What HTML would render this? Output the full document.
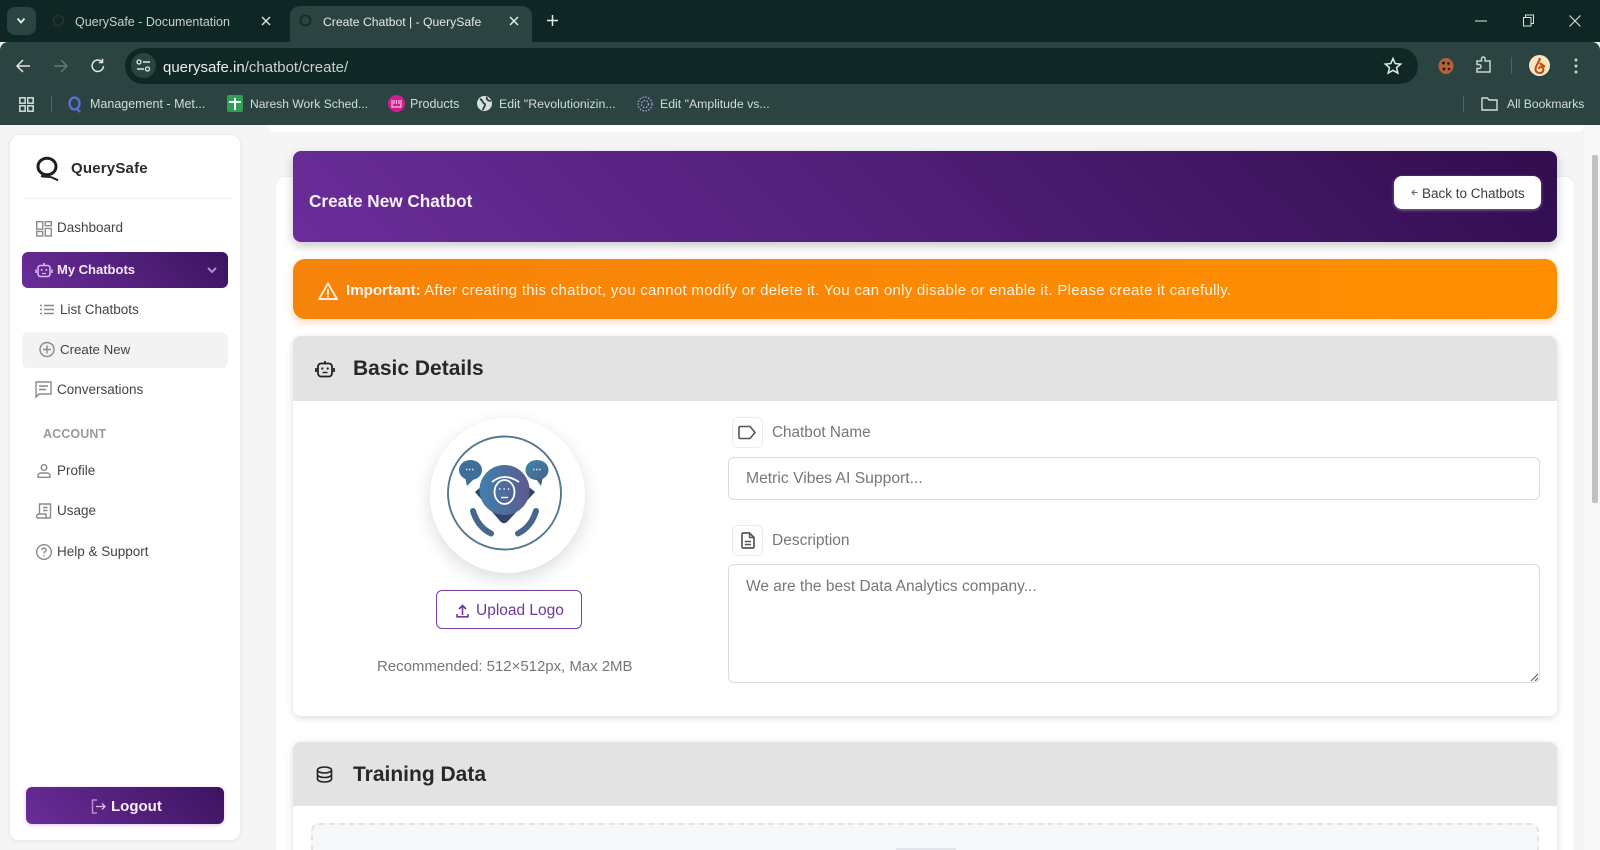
<!DOCTYPE html>
<html lang="en"><head><meta charset="utf-8"><title>Create Chatbot | - QuerySafe</title>
<style>
*{box-sizing:border-box}
html{margin:0;padding:0;width:1600px;height:850px;overflow:hidden}
body{margin:0;padding:0;width:1600px;height:850px;overflow:hidden;position:relative;background:#f5f5f5;font-family:"Liberation Sans",sans-serif}
.a{position:absolute;white-space:nowrap}
.t{position:absolute;white-space:nowrap;line-height:20px;transform:translateY(-9px)}
svg{position:absolute;overflow:visible}
.tb{color:#d3dcd9;font-size:12.2px}
.nav{color:#444;font-size:13.5px}
.ic{fill:none;stroke:#8a8a8a;stroke-width:1.4}
.grad{background:linear-gradient(45deg,#6a2d9a 0%,#4f1e76 60%,#3d1360 100%)}
#clip{position:absolute;left:0;top:0;width:1600px;height:850px;overflow:hidden}
</style></head><body><div id="clip">

<!-- Browser chrome -->
<div class="a" style="left:0;top:0;width:1600px;height:42px;background:#0e2624"></div>
<div class="a" style="left:0;top:42px;width:1600px;height:83px;background:#2c4441;border-radius:8px 8px 0 0"></div>
<div class="a" style="left:7px;top:7px;width:29px;height:28px;background:#2c4441;border-radius:8px"></div>
<svg style="left:16px;top:17px" width="10" height="8"><path d="M1.5 1.5L5 5.5L8.5 1.5" fill="none" stroke="#e6ecea" stroke-width="1.8"/></svg>
<div class="a" style="left:290px;top:6px;width:242px;height:38px;background:#2c4441;border-radius:10px 10px 0 0"></div>
<svg style="left:52px;top:14px" width="14" height="14"><circle cx="6.5" cy="6.5" r="5" fill="none" stroke="#27302e" stroke-width="2"/></svg>
<div class="t tb" style="left:75px;top:20.5px;font-size:12.5px;color:#c7d0ce">QuerySafe - Documentation</div>
<svg style="left:261px;top:16px" width="10" height="10"><path d="M1 1L9 9M9 1L1 9" stroke="#d6dedc" stroke-width="1.5"/></svg>
<svg style="left:299px;top:14px" width="14" height="14"><circle cx="6.5" cy="6.5" r="5" fill="none" stroke="#1a2a28" stroke-width="2"/></svg>
<div class="t tb" style="left:323px;top:20.5px;font-size:12.2px;color:#e4eae8">Create Chatbot | - QuerySafe</div>
<svg style="left:509px;top:16px" width="10" height="10"><path d="M1 1L9 9M9 1L1 9" stroke="#e4eae8" stroke-width="1.5"/></svg>
<svg style="left:547px;top:15px" width="11" height="11"><path d="M5.500 0V11M0 5.500H11" stroke="#e4eae8" stroke-width="1.500"/></svg>
<svg style="left:1475px;top:20px" width="12" height="2"><path d="M0 1H12" stroke="#e4eae8" stroke-width="1"/></svg>
<svg style="left:1522px;top:14px" width="13" height="13"><path d="M1.5 3.5H9V12H1.5ZM3.5 3.5V1H11.5V9.5H9" fill="none" stroke="#dce3e1" stroke-width="1"/></svg>
<svg style="left:1569px;top:15px" width="12" height="12"><path d="M.5 .5L11.5 11.5M11.5 .5L.5 11.5" stroke="#e4eae8" stroke-width="1"/></svg>

<svg style="left:15px;top:58px" width="16" height="16"><path d="M15 8H2M8 2L2 8L8 14" fill="none" stroke="#dfe6e4" stroke-width="1.5"/></svg>
<svg style="left:53px;top:58px" width="16" height="16"><path d="M1 8H14M8 2L14 8L8 14" fill="none" stroke="#667a75" stroke-width="1.4"/></svg>
<svg style="left:90px;top:58px" width="16" height="16"><path d="M13.5 8A5.7 5.7 0 1 1 11.7 3.6M12.5 .8V4.5H8.8" fill="none" stroke="#dfe6e4" stroke-width="1.5"/></svg>
<div class="a" style="left:125px;top:48px;width:1293px;height:36px;border-radius:18px;background:#0f2725"></div>
<div class="a" style="left:131px;top:53px;width:25px;height:25px;border-radius:50%;background:#2c4441"></div>
<svg style="left:136px;top:59px" width="15" height="14"><circle cx="3" cy="3" r="2" fill="none" stroke="#e0e7e5" stroke-width="1.3"/><path d="M7 3H14M1 10H8" stroke="#e0e7e5" stroke-width="1.4"/><circle cx="11.5" cy="10" r="2" fill="none" stroke="#e0e7e5" stroke-width="1.3"/></svg>
<div class="t" style="left:163px;top:67px;font-size:15px;color:#e9eeec">querysafe.in<span style="color:#c8d1cf">/chatbot/create/</span></div>
<svg style="left:1384px;top:57px" width="18" height="18"><path d="M9 1.5L11.2 6.6L16.7 7.1L12.5 10.7L13.8 16.1L9 13.3L4.2 16.1L5.5 10.7L1.3 7.1L6.8 6.6Z" fill="none" stroke="#e4eae8" stroke-width="1.5"/></svg>
<svg style="left:1438px;top:57px" width="16" height="18"><ellipse cx="8" cy="9" rx="7.500" ry="8" fill="#b5623a"/><circle cx="5.500" cy="6" r="1.500" fill="#2b1a10"/><circle cx="10.500" cy="6.500" r="1.400" fill="#2b1a10"/><circle cx="6" cy="12" r="1.500" fill="#2b1a10"/><circle cx="11" cy="12" r="1.300" fill="#2b1a10"/></svg>
<svg style="left:1475px;top:56px" width="18" height="18"><path d="M2 5H6.5V2.8A1.8 1.8 0 0 1 10.100 2.800V5H15V16H2V12.500H4A2 2 0 0 0 4 8.500H2Z" fill="none" stroke="#c9d3d0" stroke-width="1.500"/></svg>
<div class="a" style="left:1511px;top:57px;width:1px;height:17px;background:#4d6461"></div>
<div class="a" style="left:1529px;top:55px;width:21px;height:21px;border-radius:50%;background:#f7e6c4"></div>
<svg style="left:1529px;top:55px" width="21" height="21"><path d="M11 3C10 8 7 10 6.500 14C6.500 17 9 18 11 18C14 18 15 15 14 13C13 11 10.500 11 10 14M11 8C12.500 10 14.500 10 16 12" fill="none" stroke="#c04a12" stroke-width="2"/></svg>
<svg style="left:1574px;top:57px" width="4" height="18"><circle cx="2" cy="3" r="1.500" fill="#c9d3d0"/><circle cx="2" cy="9" r="1.500" fill="#c9d3d0"/><circle cx="2" cy="15" r="1.500" fill="#c9d3d0"/></svg>

<svg style="left:19px;top:97px" width="15" height="15"><g fill="none" stroke="#d6dedc" stroke-width="1.500"><rect x=".8" y=".8" width="5.400" height="5.400"/><rect x="8.800" y=".8" width="5.400" height="5.400"/><rect x=".8" y="8.800" width="5.400" height="5.400"/><rect x="8.800" y="8.800" width="5.400" height="5.400"/></g></svg>
<div class="a" style="left:51px;top:96px;width:1px;height:16px;background:#4d6461"></div>
<svg style="left:67px;top:96px" width="15" height="17"><ellipse cx="7.500" cy="7.500" rx="5" ry="6" fill="none" stroke="#5a6fe0" stroke-width="2.200"/><path d="M9 12L13 16" stroke="#5a6fe0" stroke-width="2.200"/></svg>
<div class="t tb" style="left:90px;top:102.500px;font-size:12.500px">Management - Met...</div>
<div class="a" style="left:227px;top:95px;width:16px;height:17px;background:#2f9e56;border-radius:2px"></div>
<svg style="left:227px;top:95px" width="16" height="17"><path d="M2 7H14M8 3V15" stroke="#fff" stroke-width="2"/></svg>
<div class="t tb" style="left:250px;top:102.500px;font-size:12.100px">Naresh Work Sched...</div>
<div class="a" style="left:388px;top:95px;width:17px;height:17px;background:#d01d8f;border-radius:50%"></div>
<svg style="left:391px;top:98px" width="11" height="11"><path d="M1 2V9H10V2M3 2V6M5.500 2V6M8 2V6" fill="none" stroke="#f7bde3" stroke-width="1.200"/></svg>
<div class="t tb" style="left:410px;top:102.500px;font-size:12.500px">Products</div>
<div class="a" style="left:477px;top:96px;width:15px;height:15px;background:#d8dfdd;border-radius:50%"></div>
<svg style="left:477px;top:96px" width="15" height="15"><path d="M3 3C6 4 5 7 8 8C9 10 6 11 6 14M10 1C9 3 11 5 14 5" fill="none" stroke="#2c4441" stroke-width="1.800"/></svg>
<div class="t tb" style="left:499px;top:102.500px;font-size:12.400px">Edit "Revolutionizin...</div>
<svg style="left:637px;top:96px" width="16" height="16"><circle cx="8" cy="8" r="7" fill="none" stroke="#a8a4e0" stroke-width="1.300" stroke-dasharray="1.500 1.500"/><circle cx="8" cy="8" r="3.500" fill="none" stroke="#a8a4e0" stroke-width="1.300" stroke-dasharray="1.500 1.500"/></svg>
<div class="t tb" style="left:660px;top:102.500px;font-size:12.300px">Edit "Amplitude vs...</div>
<div class="a" style="left:1463px;top:96px;width:1px;height:16px;background:#4d6461"></div>
<svg style="left:1481px;top:97px" width="17" height="14"><path d="M1 1H6.500L8 3H16V13H1Z" fill="none" stroke="#d6dedc" stroke-width="1.400"/></svg>
<div class="t tb" style="left:1507px;top:102.500px;font-size:12.100px">All Bookmarks</div>

<!-- Top card remnant -->
<div class="a" style="left:268px;top:125px;width:1316px;height:7px;background:#fff;border-radius:0 0 12px 12px"></div>

<!-- Main card -->
<div class="a" style="left:275px;top:176px;width:1300px;height:680px;background:#fff;border:1px solid #eeeeee;border-radius:10px 10px 0 0"></div>

<!-- Scrollbar -->
<div class="a" style="left:1585px;top:125px;width:15px;height:725px;background:#f8f8f8"></div>
<div class="a" style="left:1592px;top:155px;width:6px;height:348px;background:#c1c1c1;border-radius:2px"></div>

<!-- Sidebar -->
<div class="a" style="left:9px;top:134px;width:232px;height:707px;background:#fff;border:1px solid #ececec;border-radius:10px;box-shadow:0 1px 3px rgba(0,0,0,.05)"></div>
<svg style="left:35px;top:156px" width="25" height="26"><ellipse cx="12" cy="10.500" rx="9" ry="8.300" fill="none" stroke="#1f1f1f" stroke-width="3"/><path d="M6 20C11 21.500 13 20 17 21.500C19 22.300 21 23 23 24.500" fill="none" stroke="#1f1f1f" stroke-width="2"/></svg>
<div class="t" style="left:71px;top:168px;font-size:15px;font-weight:700;color:#2b2b2b;letter-spacing:.2px">QuerySafe</div>
<div class="a" style="left:24px;top:198px;width:208px;height:1px;background:#f0f0f0"></div>

<svg style="left:36px;top:221px" width="16" height="16" class="ic"><rect x=".7" y=".7" width="6" height="7.500"/><rect x="9.300" y=".7" width="6" height="4"/><rect x=".7" y="10.500" width="6" height="4.500"/><rect x="9.300" y="7.500" width="6" height="7.500"/></svg>
<div class="t nav" style="left:57px;top:227px">Dashboard</div>

<div class="a grad" style="left:22px;top:252px;width:206px;height:36px;border-radius:6px"></div>
<svg style="left:35px;top:262px" width="18" height="17"><rect x="3" y="3.500" width="12" height="11" rx="2.500" fill="none" stroke="#d9b9ee" stroke-width="1.600"/><path d="M9 1V3.500M1 7.500V11M17 7.500V11" stroke="#d9b9ee" stroke-width="1.600"/><circle cx="6.700" cy="8" r="1" fill="#d9b9ee"/><circle cx="11.300" cy="8" r="1" fill="#d9b9ee"/><path d="M7 11.500H11" stroke="#d9b9ee" stroke-width="1.200"/></svg>
<div class="t" style="left:57px;top:269px;font-size:13px;font-weight:700;color:#f3e9fa">My Chatbots</div>
<svg style="left:207px;top:267px" width="10" height="7"><path d="M1 1L5 5L9 1" fill="none" stroke="#b08fc8" stroke-width="2"/></svg>

<svg style="left:40px;top:304px" width="14" height="11" class="ic"><path d="M4 1.500H14M4 5.500H14M4 9.500H14M0 1.500H2M0 5.500H2M0 9.500H2"/></svg>
<div class="t nav" style="left:60px;top:309px">List Chatbots</div>

<div class="a" style="left:22px;top:332px;width:206px;height:36px;border-radius:6px;background:#f3f3f3"></div>
<svg style="left:39px;top:342px" width="16" height="16" class="ic"><circle cx="8" cy="7.500" r="7"/><path d="M8 3.500V11.500M4 7.500H12"/></svg>
<div class="t nav" style="left:60px;top:349px;font-size:13.300px">Create New</div>

<svg style="left:35px;top:381px" width="17" height="17" class="ic"><path d="M1 1H16V13H4L1 16Z"/><path d="M4 5H13M4 8.500H11"/></svg>
<div class="t nav" style="left:57px;top:389px">Conversations</div>

<div class="t" style="left:43px;top:433px;font-size:12.500px;font-weight:700;color:#9a9a9a;letter-spacing:.1px">ACCOUNT</div>

<svg style="left:37px;top:464px" width="14" height="14" class="ic"><circle cx="7" cy="3.500" r="2.800"/><path d="M1 13.300V11.500C1 10 2.500 9 4 9H10C11.500 9 13 10 13 11.500V13.300Z"/></svg>
<div class="t nav" style="left:57px;top:470px">Profile</div>

<svg style="left:36px;top:503px" width="16" height="16" class="ic"><path d="M3.500 11V1H14.500V15H2A1.500 1.500 0 0 1 1 12.500C1 11.500 2 11 3.500 11H10V15M7 4.500H11.500M7 7.500H11.500"/></svg>
<div class="t nav" style="left:57px;top:510px">Usage</div>

<svg style="left:36px;top:544px" width="16" height="16" class="ic"><circle cx="8" cy="8" r="7.300"/><path d="M5.800 6C5.800 3.500 10.200 3.500 10.200 6C10.200 7.700 8 7.500 8 9.500M8 11V12.300"/></svg>
<div class="t nav" style="left:57px;top:551px">Help &amp; Support</div>

<div class="a grad" style="left:26px;top:787px;width:198px;height:37px;border-radius:6px;box-shadow:0 1px 4px rgba(160,60,200,.3)"></div>
<svg style="left:91px;top:799px" width="15" height="15"><path d="M6 1H1.500V14H6" fill="none" stroke="#b98ad6" stroke-width="1.500"/><path d="M5 7.500H14M11 4.500L14 7.500L11 10.500" fill="none" stroke="#d9c2ea" stroke-width="1.300"/></svg>
<div class="t" style="left:111px;top:806px;font-size:15px;font-weight:700;color:#f7effc">Logout</div>

<!-- Purple header -->
<div class="a" style="left:293px;top:151px;width:1264px;height:91px;border-radius:8px;background:linear-gradient(45deg,#6a2d9a 0%,#4f1e76 50%,#310d4e 100%);box-shadow:0 4px 10px rgba(0,0,0,.22)"></div>
<div class="t" style="left:309px;top:200px;font-size:17.200px;font-weight:700;color:#f8f1fc">Create New Chatbot</div>
<div class="a" style="left:1394px;top:176px;width:147px;height:33px;background:#fff;border-radius:8px;box-shadow:0 1px 3px rgba(255,255,255,.4)"></div>
<svg style="left:1411px;top:189px" width="7" height="7"><path d="M6.500 3.500H1.500M3.500 1L1 3.500L3.500 6" fill="none" stroke="#666" stroke-width="1"/></svg>
<div class="t" style="left:1422px;top:193px;font-size:13.500px;color:#3c3c3c">Back to Chatbots</div>

<!-- Orange banner -->
<div class="a" style="left:293px;top:259px;width:1264px;height:60px;border-radius:12px;background:linear-gradient(90deg,#f6830a,#ff8f00);box-shadow:0 3px 8px rgba(245,130,10,.3)"></div>
<svg style="left:318px;top:282px" width="20" height="18"><path d="M10 1.500L19 17H1Z" fill="none" stroke="#fff6ea" stroke-width="1.700"/><path d="M10 7V12.500M10 13.500V15.500" stroke="#fff6ea" stroke-width="1.700"/></svg>
<div class="t" style="left:346px;top:290px;font-size:15px;color:#fff1de;letter-spacing:.28px"><b style="color:#fff8ee;letter-spacing:0;font-size:15.100px">Important:</b> After creating this chatbot, you cannot modify or delete it. You can only disable or enable it. Please create it carefully.</div>

<!-- Basic Details -->
<div class="a" style="left:293px;top:336px;width:1264px;height:380px;border-radius:8px;background:#fff;box-shadow:0 2px 8px rgba(0,0,0,.14)"></div>
<div class="a" style="left:293px;top:336px;width:1264px;height:65px;border-radius:8px 8px 0 0;background:#e3e3e3"></div>
<svg style="left:315px;top:360px" width="20" height="18"><rect x="3" y="3.500" width="14" height="13" rx="3" fill="none" stroke="#222" stroke-width="1.800"/><path d="M10 1V3.500M1 8V12M19 8V12" stroke="#222" stroke-width="1.800"/><circle cx="7.300" cy="8.500" r="1.100" fill="#222"/><circle cx="12.700" cy="8.500" r="1.100" fill="#222"/><path d="M7.500 12.500H12.500" stroke="#222" stroke-width="1.400"/></svg>
<div class="t" style="left:353px;top:367.500px;font-size:21px;font-weight:700;color:#282828">Basic Details</div>

<!-- Logo -->
<div class="a" style="left:430px;top:418px;width:155px;height:155px;border-radius:50%;background:#fff;box-shadow:0 6px 18px rgba(0,0,0,.14)"></div>
<svg style="left:430px;top:418px" width="155" height="155" viewBox="430 418 155 155">
<defs><linearGradient id="g" x1="0" y1="0" x2="1" y2="0"><stop offset="0" stop-color="#4080ab"/><stop offset="1" stop-color="#5c5a90"/></linearGradient>
<linearGradient id="g2" x1="0" y1="0" x2="1" y2="1"><stop offset="0" stop-color="#3f86a8"/><stop offset="1" stop-color="#44618c"/></linearGradient></defs>
<circle cx="504.500" cy="493" r="56.500" fill="none" stroke="#54788f" stroke-width="1.900"/>
<ellipse cx="470.500" cy="470" rx="11.500" ry="10" fill="#3d6f98"/><path d="M465 477L467 486L474 479Z" fill="#3d6f98"/>
<ellipse cx="537" cy="470" rx="11.500" ry="10" fill="url(#g2)"/><path d="M536 479L541 486L543 477Z" fill="#44618c"/>
<path d="M466 469.500H475M533 469.500H542" stroke="#dfeaf2" stroke-width="1.500" stroke-dasharray="1.500 1.500"/>
<path d="M476 492L504 469L534 492L507 521Q504 524 501 521Z" fill="#2f4468" stroke="#2f4468" stroke-width="1.500" stroke-linejoin="round"/>
<circle cx="504.500" cy="490" r="25" fill="url(#g)"/>
<ellipse cx="504.500" cy="492" rx="10" ry="12" fill="none" stroke="#fff" stroke-width="1.800"/>
<path d="M492 482Q504 472 519 482" fill="none" stroke="#fff" stroke-width="1.800"/>
<path d="M499 489H510" stroke="#fff" stroke-width="1.400" stroke-dasharray="1.400 3"/><path d="M501 497.500H508" stroke="#fff" stroke-width="1.400"/>
<path d="M473 511C476 521 482 529 491 533.500" fill="none" stroke="#45678f" stroke-width="6" stroke-linecap="round"/>
<path d="M536 511C533 521 527 529 518 533.500" fill="none" stroke="#45678f" stroke-width="6" stroke-linecap="round"/>
</svg>

<div class="a" style="left:436px;top:590px;width:146px;height:39px;border:1px solid #7a3fa6;border-radius:6px;background:#fff"></div>
<svg style="left:456px;top:604px" width="13" height="14"><path d="M6.500 11V2M3 5L6.500 1.500L10 5M1 10V12.800H12V10" fill="none" stroke="#6f35a0" stroke-width="1.600"/></svg>
<div class="t" style="left:476px;top:610px;font-size:15.500px;color:#6f35a0">Upload Logo</div>
<div class="t" style="left:377px;top:666px;font-size:15px;color:#777;letter-spacing:-.03px">Recommended: 512×512px, Max 2MB</div>

<!-- Fields -->
<div class="a" style="left:732px;top:417px;width:31px;height:31px;border:1px solid #ececec;border-radius:6px;background:#fff"></div>
<svg style="left:738px;top:425px" width="19" height="15"><path d="M2 1.500H12L17 7.500L12 13.500H2Q1 13.500 1 12.500V2.500Q1 1.500 2 1.500Z" fill="none" stroke="#555" stroke-width="1.600"/></svg>
<div class="t" style="left:772px;top:432px;font-size:15.300px;color:#777">Chatbot Name</div>
<div class="a" style="left:728px;top:457px;width:812px;height:43px;border:1px solid #dcdcdc;border-radius:6px;background:#fff"></div>
<div class="t" style="left:746px;top:478px;font-size:15.700px;color:#777">Metric Vibes AI Support...</div>

<div class="a" style="left:732px;top:525px;width:31px;height:31px;border:1px solid #ececec;border-radius:6px;background:#fff"></div>
<svg style="left:741px;top:532px" width="14" height="17"><path d="M1 2.500Q1 1 2.500 1H8.500L13 5.500V14.500Q13 16 11.500 16H2.500Q1 16 1 14.500Z" fill="none" stroke="#555" stroke-width="1.700"/><path d="M8.500 1V5.500H13M3.800 9.500H10M3.800 12.500H10" fill="none" stroke="#555" stroke-width="1.400"/></svg>
<div class="t" style="left:772px;top:540px;font-size:15.500px;color:#777">Description</div>
<div class="a" style="left:728px;top:564px;width:812px;height:119px;border:1px solid #dcdcdc;border-radius:6px;background:#fff"></div>
<div class="t" style="left:746px;top:586px;font-size:15.500px;color:#777">We are the best Data Analytics company...</div>
<svg style="left:1530px;top:673px" width="9" height="9"><path d="M1 8L8 1M5 8L8 5" stroke="#666" stroke-width="1.200"/></svg>

<!-- Training Data -->
<div class="a" style="left:293px;top:742px;width:1264px;height:120px;border-radius:8px;background:#fff;box-shadow:0 2px 8px rgba(0,0,0,.14)"></div>
<div class="a" style="left:293px;top:742px;width:1264px;height:64px;border-radius:8px 8px 0 0;background:#e3e3e3"></div>
<svg style="left:316px;top:766px" width="17" height="17"><g fill="none" stroke="#222" stroke-width="1.600"><ellipse cx="8.500" cy="4" rx="7" ry="3"/><path d="M1.500 4V13C1.500 14.700 4.500 16 8.500 16S15.500 14.700 15.500 13V4M1.500 8.500C1.500 10.200 4.500 11.500 8.500 11.500S15.500 10.200 15.500 8.500"/></g></svg>
<div class="t" style="left:353px;top:773.500px;font-size:21px;font-weight:700;color:#282828">Training Data</div>
<div class="a" style="left:311px;top:823px;width:1228px;height:60px;border:2px dashed #e2e5e8;border-radius:8px;background:#f7f8fa"></div>
<div class="a" style="left:896px;top:848px;width:60px;height:2px;background:#e2e5ea"></div>

</div></body></html>
